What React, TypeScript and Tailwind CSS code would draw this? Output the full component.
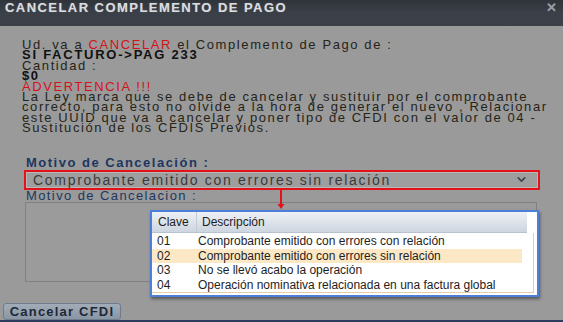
import { ChevronDown } from "lucide-react";

const rows = [
  { clave: "01", desc: "Comprobante emitido con errores con relación" },
  { clave: "02", desc: "Comprobante emitido con errores sin relación" },
  { clave: "03", desc: "No se llevó acabo la operación" },
  { clave: "04", desc: "Operación nominativa relacionada en una factura global" },
];

function MotivoPopup() {
  return (
    <div className="absolute left-[150px] top-[210px] w-[389px] h-[87px] border-2 border-[#4d7fd8] bg-white shadow-[1px_2px_3px_rgba(0,0,0,0.45)] flex flex-col text-[12px] text-[#1e1e1e]">
      {/* header */}
      <div className="flex h-[21px] shrink-0">
        <div className="flex flex-1 bg-gradient-to-b from-[#eef1f6] to-[#cdd5e0] border-b border-[#b9c2cf]">
          <div className="w-[45px] pl-[6px] flex items-center border-r border-[#c3cad6]">Clave</div>
          <div className="flex-1 pl-[5px] flex items-center">Descripción</div>
        </div>
        <div className="w-[10px] bg-white" />
      </div>
      {/* rows */}
      <div className="flex-1 mr-[3px] mb-[3px] border-r border-b border-[#e0cfa8] pt-[1px]">
        {rows.map((r) => (
          <div
            key={r.clave}
            className={`flex h-[14.6px] items-center mr-[11px] ${r.clave === "02" ? "bg-[#fde8c6]" : ""}`}
          >
            <div className="w-[46px] pl-[5px]">{r.clave}</div>
            <div>{r.desc}</div>
          </div>
        ))}
      </div>
    </div>
  );
}

export default function App() {
  return (
    <div className="relative w-[563px] h-[322px] overflow-hidden flex flex-col bg-[#9a9a9a] font-['Liberation_Sans',Arial,sans-serif]">
      {/* title bar */}
      <div className="h-[26px] shrink-0 flex items-start justify-between bg-gradient-to-b from-[#2f343b] via-[#3b4048] to-[#3c4149] pl-[5px] pr-[6px]">
        <span className="text-[13px] leading-[15px] font-bold tracking-[1.45px] text-[#d9dbde] [text-shadow:0_0_1px_rgba(255,255,255,0.4)]">
          CANCELAR COMPLEMENTO DE PAGO
        </span>
        <span className="text-[13px] leading-[16px] font-bold text-[#9ba1a9]">✕</span>
      </div>

      {/* body */}
      <div className="flex flex-col shrink-0 pt-[14px] pl-[22px]">
        <div className="text-[13px] leading-[10.4px] tracking-[1.6px] text-[#262418]">
          <div>
            Ud. va a <span className="text-[#d4121a]">CANCELAR</span> el Complemento de Pago de :
          </div>
          <div className="font-bold text-[#111] tracking-[1.75px]">SI FACTURO-&gt;PAG 233</div>
          <div>Cantidad :</div>
          <div className="font-bold text-[#111]">$0</div>
          <div className="text-[#d4121a]">ADVERTENCIA !!!</div>
          <div>La Ley marca que se debe de cancelar y sustituir por el comprobante</div>
          <div>correcto, para esto no olvide a la hora de generar el nuevo , Relacionar</div>
          <div>este UUID que va a cancelar y poner tipo de CFDI con el valor de 04 -</div>
          <div>Sustitución de los CFDIS Previos.</div>
        </div>

        <div className="mt-[22px] ml-[4px] text-[13px] leading-[14px] font-bold tracking-[1.5px] text-[#1d3760]">
          Motivo de Cancelación :
        </div>

        <div className="ml-[2px] w-[516px] h-[20px] border-2 border-[#e3121a] flex">
          <div className="flex-1 flex items-center justify-between bg-[#9e9e9e] border border-[#b7b7b7] pl-[6px] pr-[9px]">
            <span className="text-[14px] leading-[14px] tracking-[1.7px] text-[#3b3b3b]">
              Comprobante emitido con errores sin relación
            </span>
            <ChevronDown className="w-[13px] h-[13px] text-[#3e4450]" strokeWidth={3.2} />
          </div>
        </div>

        <div className="ml-[4px] text-[13px] leading-[11px] tracking-[1.4px] text-[#1d3760]">
          Motivo de Cancelacion :
        </div>

        <div className="mt-[1px] ml-[3px] w-[512px] h-[80px] border border-[#808080] bg-[#9b9b9b]" />
      </div>

      {/* footer */}
      <div className="flex mt-[21px] pl-[3px]">
        <button className="w-[118px] h-[17px] rounded-[3px] border border-[#6f7c8c] bg-gradient-to-b from-[#a2acb8] to-[#8a96a4] text-[13px] leading-[15px] font-bold tracking-[1.2px] text-[#1d2838]">
          Cancelar CFDI
        </button>
      </div>
      <div className="mt-auto h-[2px] shrink-0 bg-[#2c3d60]" />

      {/* annotation arrow */}
      <svg className="absolute left-[276px] top-[190px]" width="10" height="20" viewBox="0 0 10 20">
        <line x1="5" y1="0" x2="5" y2="16" stroke="#e3121a" strokeWidth="2" />
        <polygon points="1.5,14 8.5,14 5,19" fill="#e3121a" />
      </svg>

      <MotivoPopup />
    </div>
  );
}
